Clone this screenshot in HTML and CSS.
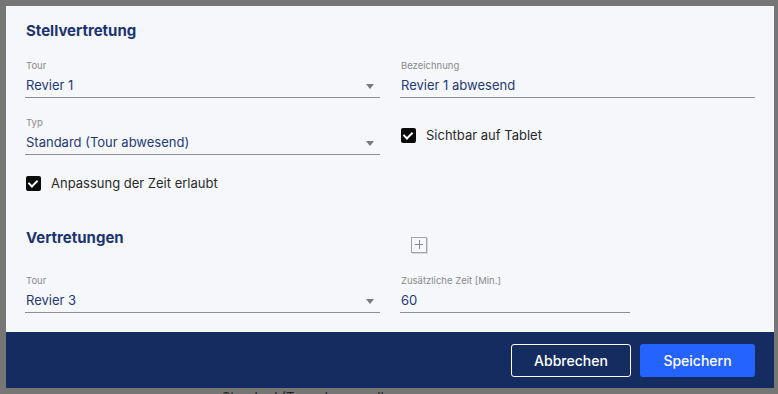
FILE: index.html
```html
<!DOCTYPE html>
<html lang="de">
<head>
    <meta charset="UTF-8">
    <title>Stellvertretung</title>
    <link rel="stylesheet" href="styles.css">
</head>
<body>
    <div class="page-behind">Standard (Tour abwesend)</div>

    <div class="dialog">
        <div class="dialog-body">
            <h2 class="section-title">Stellvertretung</h2>

            <div class="form-row">
                <div class="field">
                    <label>Tour</label>
                    <div class="field-value select">Revier 1<span class="caret"></span></div>
                </div>
                <div class="field">
                    <label>Bezeichnung</label>
                    <div class="field-value">Revier 1 abwesend</div>
                </div>
            </div>

            <div class="form-row">
                <div class="field">
                    <label>Typ</label>
                    <div class="field-value select">Standard (Tour abwesend)<span class="caret"></span></div>
                </div>
                <div class="field check-cell">
                    <div class="check">
                        <span class="box"></span>
                        <span>Sichtbar auf Tablet</span>
                    </div>
                </div>
            </div>

            <div class="check check-row">
                <span class="box"></span>
                <span>Anpassung der Zeit erlaubt</span>
            </div>

            <div class="form-row heading-row">
                <h2 class="section-title">Vertretungen</h2>
                <div class="add-cell">
                    <button class="add-button" title="Hinzufügen"></button>
                </div>
            </div>

            <div class="form-row">
                <div class="field">
                    <label>Tour</label>
                    <div class="field-value select">Revier 3<span class="caret"></span></div>
                </div>
                <div class="field narrow">
                    <label>Zusätzliche Zeit [Min.]</label>
                    <div class="field-value">60</div>
                </div>
            </div>
        </div>

        <div class="dialog-footer">
            <button class="btn btn-outline">Abbrechen</button>
            <button class="btn btn-primary">Speichern</button>
        </div>
    </div>
</body>
</html>
```

FILE: styles.css
```css
/* Grundlayout */
body {
    margin: 0;
    padding: 6px 4px 6px 6px;
    background: #767676;
    font-family: Inter, "Noto Sans", sans-serif;
    overflow: hidden;
    position: relative;
    height: 394px;
    box-sizing: border-box;
}

/* Seite unter dem Dialog, nur unten angeschnitten */
.page-behind {
    position: absolute;
    left: 222px;
    top: 389px;
    font-size: 13px;
    line-height: 16px;
    color: #1e1e1e;
}

.dialog {
    position: relative;
    width: 768px;
    height: 382px;
    background: #f5f7fa;
    display: flex;
    flex-direction: column;
}

.dialog-body {
    flex: 1;
    overflow: hidden;
    padding: 16px 19px 0 19px;
}

.section-title {
    margin: 0 0 0 1px;
    font-size: 15px;
    line-height: 18px;
    font-weight: 700;
    color: #1b3470;
}

/* Formularzeilen */
.form-row {
    display: flex;
    gap: 20px;
}

.form-row + .form-row {
    margin-top: 19px;
}

.section-title + .form-row {
    margin-top: 20px;
}

.field {
    width: 355px;
}

.field.narrow {
    width: 230px;
}

.field label {
    display: block;
    font-size: 9.5px;
    line-height: 12px;
    color: #8a8a8a;
    margin-left: 1px;
}

.field-value {
    margin-top: 4px;
    height: 21px;
    line-height: 18px;
    font-size: 13px;
    color: #1f3a78;
    border-bottom: 1px solid #8e8e8e;
    padding-left: 1px;
    position: relative;
}

.caret {
    position: absolute;
    right: 6px;
    top: 8px;
    border-left: 4px solid transparent;
    border-right: 4px solid transparent;
    border-top: 5px solid #7a7a7a;
}

/* Checkboxen */
.check {
    display: flex;
    align-items: center;
    gap: 10px;
    font-size: 13px;
    color: #2a2a2a;
    margin-left: 1px;
}

.check .box {
    width: 15px;
    height: 15px;
    border-radius: 2px;
    background: #0a0a0a;
    position: relative;
    flex-shrink: 0;
}

.check .box::after {
    content: "";
    position: absolute;
    left: 4px;
    top: 2px;
    width: 4px;
    height: 7px;
    border-right: 2px solid #fff;
    border-bottom: 2px solid #fff;
    transform: rotate(45deg);
}

.check-cell {
    padding-top: 10px;
}

.check-row {
    margin-top: 20px;
}

.heading-row {
    margin-top: 38px;
}

.form-row.heading-row + .form-row {
    margin-top: 22px;
}

.heading-row .section-title {
    width: 354px;
}

.add-cell {
    padding-top: 8px;
    padding-left: 11px;
}

.add-button {
    display: block;
    width: 16px;
    height: 16px;
    padding: 0;
    border: 1px solid #a4a4a4;
    background: #f5f7fa;
    box-shadow: 1px 1px 0 #d8d8d8;
    position: relative;
    cursor: pointer;
}

.add-button::before,
.add-button::after {
    content: "";
    position: absolute;
    background: #8a8a8a;
}

.add-button::before {
    left: 3px;
    top: 6px;
    width: 8px;
    height: 1px;
}

.add-button::after {
    left: 7px;
    top: 2px;
    width: 1px;
    height: 9px;
}

/* Fusszeile */
.dialog-footer {
    height: 56px;
    background: #142c60;
    display: flex;
    justify-content: flex-end;
    align-items: flex-start;
    gap: 9px;
    padding: 12px 19px 0 0;
    box-sizing: border-box;
}

.btn {
    height: 33px;
    border-radius: 3px;
    font-family: inherit;
    font-size: 14px;
    font-weight: 500;
    color: #fff;
    cursor: pointer;
}

.btn-outline {
    width: 120px;
    background: transparent;
    border: 1px solid #fff;
}

.btn-primary {
    width: 115px;
    background: #2563ff;
    border: none;
}
```
